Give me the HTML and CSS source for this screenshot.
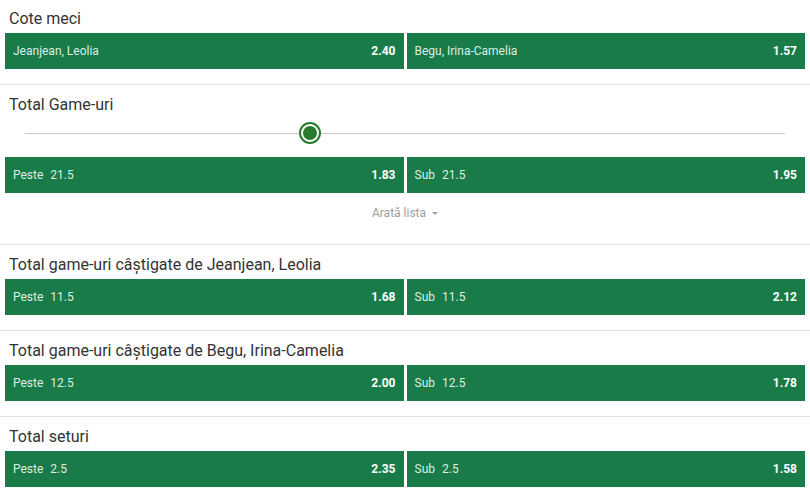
FILE: index.html
```html
<!DOCTYPE html>
<html lang="ro">
<head>
  <meta charset="UTF-8">
  <meta name="viewport" content="width=device-width, initial-scale=1.0">
  <title>Cote meci</title>
  <link rel="stylesheet" href="styles.css">
</head>
<body>
  <div class="market first">
    <h3 class="market-title">Cote meci</h3>
    <div class="odds-row">
      <button class="odd"><span class="label">Jeanjean, Leolia</span><span class="price">2.40</span></button>
      <button class="odd"><span class="label">Begu, Irina-Camelia</span><span class="price">1.57</span></button>
    </div>
  </div>

  <div class="market list">
    <h3 class="market-title">Total Game-uri</h3>
    <div class="slider">
      <div class="track"></div>
      <div class="thumb"></div>
    </div>
    <div class="odds-row">
      <button class="odd"><span class="label">Peste<span class="line">21.5</span></span><span class="price">1.83</span></button>
      <button class="odd"><span class="label">Sub<span class="line">21.5</span></span><span class="price">1.95</span></button>
    </div>
    <div class="show-list">Arată lista <span class="caret"></span></div>
  </div>

  <div class="market">
    <h3 class="market-title">Total game-uri câștigate de Jeanjean, Leolia</h3>
    <div class="odds-row">
      <button class="odd"><span class="label">Peste<span class="line">11.5</span></span><span class="price">1.68</span></button>
      <button class="odd"><span class="label">Sub<span class="line">11.5</span></span><span class="price">2.12</span></button>
    </div>
  </div>

  <div class="market">
    <h3 class="market-title">Total game-uri câștigate de Begu, Irina-Camelia</h3>
    <div class="odds-row">
      <button class="odd"><span class="label">Peste<span class="line">12.5</span></span><span class="price">2.00</span></button>
      <button class="odd"><span class="label">Sub<span class="line">12.5</span></span><span class="price">1.78</span></button>
    </div>
  </div>

  <div class="market">
    <h3 class="market-title">Total seturi</h3>
    <div class="odds-row">
      <button class="odd"><span class="label">Peste<span class="line">2.5</span></span><span class="price">2.35</span></button>
      <button class="odd"><span class="label">Sub<span class="line">2.5</span></span><span class="price">1.58</span></button>
    </div>
  </div>
</body>
</html>
```

FILE: styles.css
```css
body {
  font-family: Roboto, "Liberation Sans", sans-serif;
  margin: 0;
  background: #fff;
  color: #333;
}

.market {
  padding: 10px 5px 15px;
  border-bottom: 1px solid #e2e2e2;
}

.market.first {
  padding-top: 9px;
}

.market.list {
  padding-bottom: 23px;
}

.market-title {
  margin: 0 0 4px 4px;
  font-size: 16px;
  font-weight: 400;
  line-height: 20px;
  color: #333;
}

.market.list .market-title {
  margin-bottom: 0;
}

.odds-row {
  display: flex;
  gap: 3px;
}

.odd {
  flex: 1;
  height: 36px;
  display: flex;
  align-items: center;
  justify-content: space-between;
  padding: 0 8px;
  background-color: #187b48;
  border: none;
  font-family: inherit;
  cursor: pointer;
}

.odd:hover {
  background-color: #15703f;
}

.label {
  font-size: 12px;
  color: #dcefe3;
}

.line {
  margin-left: 7px;
}

.price {
  font-size: 12px;
  font-weight: 700;
  color: #fff;
}

.slider {
  position: relative;
  height: 37px;
  margin: 0 20px 5px;
}

.track {
  position: absolute;
  left: 0;
  right: 0;
  top: 18px;
  height: 1px;
  background: #c8c8c8;
}

.thumb {
  position: absolute;
  left: 276px;
  top: 9px;
  width: 14px;
  height: 14px;
  border-radius: 50%;
  background: #2a7a2e;
  border: 2px solid #fff;
  box-shadow: 0 0 0 2px #2a7a2e;
}

.show-list {
  margin-top: 12px;
  text-align: center;
  font-size: 12px;
  line-height: 16px;
  color: #a0a0a0;
}

.caret {
  display: inline-block;
  margin-left: 3px;
  vertical-align: middle;
  border-left: 3px solid transparent;
  border-right: 3px solid transparent;
  border-top: 3px solid #a0a0a0;
}
```
